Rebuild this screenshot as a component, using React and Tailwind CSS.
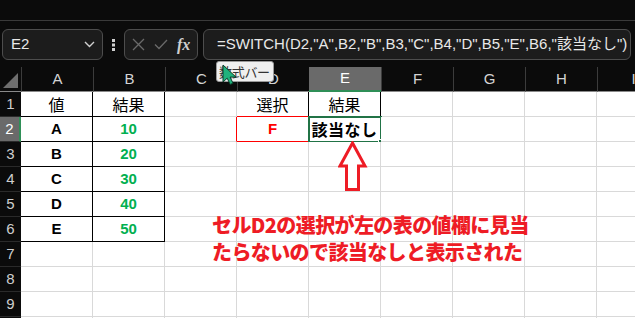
const cols = ["A", "B", "C", "D", "E", "F", "G", "H", "I"];

const jp = { fontFamily: '"Noto Sans CJK JP", "Noto Sans", sans-serif' };

// cell overrides keyed by "col+row"
const cells = {
  A1: { text: "値", cls: "bg-[#ffff00] text-black text-[16px] border-black", jp: true },
  B1: { text: "結果", cls: "bg-[#ffff00] text-black text-[16px] border-black", jp: true },
  A2: { text: "A", cls: "font-bold text-black border-black" },
  B2: { text: "10", cls: "font-bold text-[#00b050] border-black" },
  A3: { text: "B", cls: "font-bold text-black border-black" },
  B3: { text: "20", cls: "font-bold text-[#00b050] border-black" },
  A4: { text: "C", cls: "font-bold text-black border-black" },
  B4: { text: "30", cls: "font-bold text-[#00b050] border-black" },
  A5: { text: "D", cls: "font-bold text-black border-black" },
  B5: { text: "40", cls: "font-bold text-[#00b050] border-black" },
  A6: { text: "E", cls: "font-bold text-black border-black" },
  B6: { text: "50", cls: "font-bold text-[#00b050] border-black" },
  C2: { cls: "border-r-[#ff0000]" },
  D1: { text: "選択", cls: "bg-[#c6e0b4] text-black text-[16px] border-r-black border-b-[#ff0000]", jp: true },
  E1: { text: "結果", cls: "bg-[#c6e0b4] text-black text-[16px] border-r-black", jp: true },
  D2: { text: "F", cls: "font-bold text-[#ff0000] border-r-[#ff0000] border-b-[#ff0000]" },
  E2: { text: "該当なし", cls: "font-semibold text-black text-[16px] tracking-[0.5px]", jp: true, selected: true },
};

function Cell({ id }) {
  const c = cells[id] || {};
  return (
    <div
      className={`relative w-[72px] h-[25px] shrink-0 border-r border-b border-[#d9d9d9] bg-white flex items-center justify-center text-[15px] ${c.cls || ""}`}
      style={c.jp ? jp : undefined}
    >
      {c.text}
      {c.selected && (
        <div className="absolute -top-[1px] -left-[1px] w-[74px] h-[27px] border-2 border-[#217346]">
          <div className="absolute -right-[4px] -bottom-[4px] w-[6px] h-[6px] bg-[#217346] border border-white" />
        </div>
      )}
    </div>
  );
}

function FormulaBar() {
  return (
    <div className="h-[46px] pt-[8px] flex items-start">
      <div className="ml-[2px] w-[101px] h-[31px] rounded-md border border-[#4d4d4d] bg-[#1c1c1c] flex items-center justify-between pl-[8px] pr-[7px] text-[#e8e8e8] text-[15px]">
        <span>E2</span>
        <svg width="11" height="7" viewBox="0 0 11 7" fill="none" stroke="#d0d0d0" strokeWidth="1.4">
          <path d="M1 1l4.5 4.5L10 1" />
        </svg>
      </div>
      <div className="w-[21px] h-[31px] flex items-center justify-center">
        <svg width="3" height="12" viewBox="0 0 3 12" fill="#d0d0d0">
          <rect x="0" y="0" width="3" height="3" />
          <rect x="0" y="4.5" width="3" height="3" />
          <rect x="0" y="9" width="3" height="3" />
        </svg>
      </div>
      <div className="w-[74px] h-[31px] rounded-md border border-[#4d4d4d] bg-[#1c1c1c] flex items-center pl-[7px] gap-[9px]">
        <svg width="13" height="13" viewBox="0 0 13 13" stroke="#6a6a6a" strokeWidth="1.3">
          <path d="M1 1l11 11M12 1L1 12" />
        </svg>
        <svg width="14" height="11" viewBox="0 0 14 11" fill="none" stroke="#6a6a6a" strokeWidth="1.3">
          <path d="M1 5.5l4 4L13 1" />
        </svg>
        <span className="text-[#cfcfcf] text-[16px] italic font-bold leading-none" style={{ fontFamily: '"Liberation Serif", serif' }}>
          fx
        </span>
      </div>
      <div className="ml-[5px] w-[428px] h-[31px] rounded-md border border-[#4d4d4d] bg-[#1c1c1c] flex items-center pl-[13px] text-[#e8e8e8] text-[15px] whitespace-nowrap overflow-hidden" style={{ fontFamily: '"Liberation Sans", "Noto Sans CJK JP", sans-serif' }}>
        =SWITCH(D2,"A",B2,"B",B3,"C",B4,"D",B5,"E",B6,"該当なし")
      </div>
    </div>
  );
}

export default function App() {
  const rows = [1, 2, 3, 4, 5, 6, 7, 8, 9, 10];
  return (
    <div className="relative w-[635px] h-[318px] overflow-hidden bg-[#0b0b0b]" style={{ fontFamily: '"Liberation Sans", "Noto Sans CJK JP", sans-serif' }}>
      <div className="h-[21px] border-b border-[#3a3a3a]" />
      <FormulaBar />

      {/* column headers */}
      <div className="flex h-[25px]">
        <div className="w-[21px] shrink-0 h-[25px] border-b border-[#8a8a8a] flex items-end justify-end pr-[3px] pb-[3px]">
          <svg width="15" height="15" viewBox="0 0 15 15">
            <path d="M15 0L15 15L0 15Z" fill="#6e6e6e" />
          </svg>
        </div>
        {cols.map((c) => (
          <div
            key={c}
            className={`w-[72px] shrink-0 h-[25px] flex items-center justify-center text-[15px] ${
              c === "E"
                ? "bg-[#6a6a6a] text-white border-b-2 border-[#2f8f57]"
                : "text-[#d4d4d4] border-l border-[#3c3c3c] border-b border-b-[#8a8a8a]"
            }`}
          >
            {c}
          </div>
        ))}
      </div>

      {/* rows */}
      {rows.map((r) => (
        <div key={r} className="flex h-[25px]">
          <div
            className={`w-[21px] shrink-0 h-[25px] border-b border-[#2a2a2a] flex items-center justify-center text-[15px] ${
              r === 2 ? "bg-[#6a6a6a] text-white border-r-2 border-r-[#2f8f57]" : "text-[#cfcfcf]"
            }`}
          >
            {r < 10 ? r : ""}
          </div>
          {cols.map((c) => (
            <Cell key={c} id={`${c}${r}`} />
          ))}
        </div>
      ))}

      {/* up arrow */}
      <svg className="absolute left-[338px] top-[141px]" width="30" height="51" viewBox="0 0 30 51">
        <path d="M14.5 2L27 25H20.5V48.5H8.5V25H2Z" fill="white" stroke="#ee1c25" strokeWidth="3" strokeLinejoin="miter" />
      </svg>

      {/* note */}
      <div className="absolute left-[212px] top-[211px] text-[#ee1c25] text-[20px] font-black leading-[27px] tracking-[-0.6px]" style={jp}>
        <div>セルD2の選択が左の表の値欄に見当</div>
        <div>たらないので該当なしと表示された</div>
      </div>

      {/* tooltip + cursor */}
      <div className="absolute left-[216px] top-[61px] w-[58px] h-[21px] rounded-[3px] border border-[#9a9a9a] bg-[#efefef] text-[#333] text-[13px] leading-[19px] pl-[2px] whitespace-nowrap tracking-[-0.3px]" style={jp}>
        数式バー
      </div>
      <svg className="absolute left-[222px] top-[64px]" width="16" height="22" viewBox="0 0 16 22">
        <path d="M1 1V18L5.2 14.2L8.2 20.5L11 19.2L8.1 13.1H14Z" fill="#20b27c" stroke="#0b3b2a" strokeWidth="1" strokeLinejoin="round" />
      </svg>
    </div>
  );
}
